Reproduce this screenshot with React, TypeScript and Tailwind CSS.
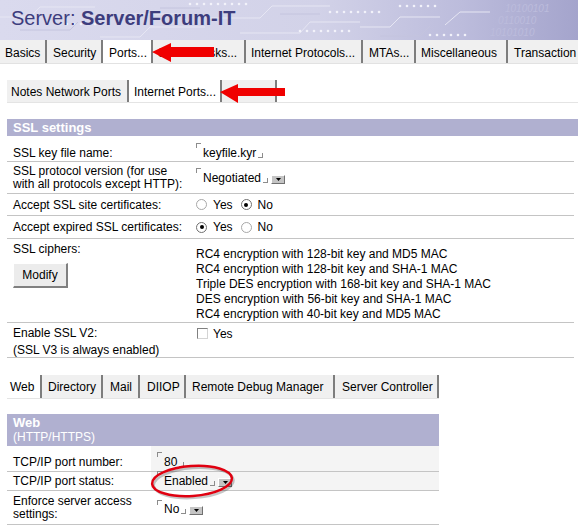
import React from "react";

function Tab({ children, cls, active }: { children?: React.ReactNode; cls: string; active?: boolean }) {
  return (
    <div
      className={`flex items-center h-full shrink-0 whitespace-nowrap border-r-2 border-r-[#7d7d7d] ${
        active ? "bg-white" : "bg-[#f0f0f0]"
      } ${cls}`}
    >
      {children}
    </div>
  );
}

function Drop() {
  return (
    <span className="ml-[3px] mb-[1px] inline-flex w-[14px] h-[9px] items-center justify-center bg-[#c4c4c4] border-t border-l border-t-white border-l-white border-b border-r border-b-[#707070] border-r-[#707070]">
      <svg width="5" height="3" viewBox="0 0 5 3">
        <path d="M0 0h5L2.5 3z" fill="#000" />
      </svg>
    </span>
  );
}

function Field({ text, dropdown }: { text: string; dropdown?: boolean }) {
  return (
    <span className="inline-flex items-end">
      <span className="self-start mt-[-3px] mr-[2px] w-[5px] h-[5px] border-l border-t border-[#8c8c8c]" />
      <span>{text}</span>
      <span className="ml-[2px] mb-[2px] w-[5px] h-[5px] border-r border-b border-[#8c8c8c]" />
      {dropdown && <Drop />}
    </span>
  );
}

function Radio({ checked }: { checked?: boolean }) {
  return (
    <span
      className={`inline-flex w-[11px] h-[11px] rounded-full border bg-white items-center justify-center ${
        checked ? "border-[#707070]" : "border-[#a8a8a8]"
      }`}
    >
      {checked && <span className="w-[4px] h-[4px] rounded-full bg-black" />}
    </span>
  );
}

function YesNo({ yes }: { yes: boolean }) {
  return (
    <span className="flex items-center">
      <Radio checked={yes} />
      <span className="ml-[6px]">Yes</span>
      <span className="ml-[8px] flex">
        <Radio checked={!yes} />
      </span>
      <span className="ml-[6px]">No</span>
    </span>
  );
}

function Header() {
  const dots: React.ReactNode[] = [];
  const rows = [
    { y: 4, x0: 190, x1: 250 },
    { y: 31, x0: 300, x1: 350 },
    { y: 12, x0: 330, x1: 380 },
    { y: 24, x0: 60, x1: 100 },
    { y: 6, x0: 400, x1: 440 },
    { y: 35, x0: 430, x1: 470 },
  ];
  rows.forEach((r, i) => {
    for (let x = r.x0; x <= r.x1; x += 7) {
      dots.push(<circle key={`${i}-${x}`} cx={x} cy={r.y} r={1.3} fill="#f2f2fa" />);
    }
  });
  return (
    <div className="relative h-[40px] overflow-hidden">
      <svg className="absolute left-0 top-0" width="578" height="40" viewBox="0 0 578 40">
        <defs>
          <linearGradient id="hg" x1="0" x2="1" y1="0" y2="0">
            <stop offset="0" stopColor="#dadaee" />
            <stop offset="0.55" stopColor="#d2d2e8" />
            <stop offset="0.8" stopColor="#bcbcdc" />
            <stop offset="1" stopColor="#a4a4cc" />
          </linearGradient>
        </defs>
        <rect width="578" height="40" fill="url(#hg)" />
        <g stroke="#e6e6f3" strokeWidth="1" fill="none">
          <path d="M0 17H30L40 7H95" />
          <path d="M100 37H140L150 27H205" />
          <path d="M210 18H260L272 6H330" />
          <path d="M240 33H300L310 22H360" />
          <path d="M360 27H390L400 17H440" />
          <path d="M120 14H180L186 20" />
          <path d="M445 25L460 12H490" />
        </g>
        <g stroke="#c4c4de" strokeWidth="1" fill="none">
          <path d="M20 30H70L78 22" />
          <path d="M160 8H200" />
          <path d="M280 14H320" />
          <path d="M380 36H420L430 26" />
        </g>
        {dots}
        <g fill="#bcbcdc" fontFamily="Liberation Sans, Arial, sans-serif" fontStyle="italic" fontSize="10">
          <text x="505" y="12">10100101</text>
          <text x="498" y="24">0110010</text>
          <text x="490" y="36">10101010</text>
        </g>
      </svg>
      <div className="relative pl-[11px] pt-[6px] text-[20px] leading-[24px] text-[#3d3d7d] whitespace-nowrap">
        Server: <span className="font-bold">Server/Forum-IT</span>
      </div>
    </div>
  );
}

export default function App() {
  return (
    <div className="relative w-[578px] h-[525px] overflow-hidden bg-white text-[12px] leading-[14px] text-black font-['Liberation_Sans',Arial,sans-serif]">
      <Header />

      {/* top tabs */}
      <div className="flex h-[24px] bg-[#f0f0f0] border-b border-[#e2e2e2] overflow-hidden">
        <Tab cls="w-[47px] pl-[5px] pt-[2px]">Basics</Tab>
        <Tab cls="w-[56px] pl-[6px] pt-[2px]">Security</Tab>
        <Tab cls="w-[50px] pl-[6px] pt-[2px]" active>
          Ports...
        </Tab>
        <Tab cls="w-[93px] pl-[5px] pt-[2px]">Server Tasks...</Tab>
        <Tab cls="w-[117px] pl-[5px] pt-[2px]">Internet Protocols...</Tab>
        <Tab cls="w-[53px] pl-[6px] pt-[2px]">MTAs...</Tab>
        <Tab cls="w-[92px] pl-[5px] pt-[2px]">Miscellaneous</Tab>
        <Tab cls="w-[90px] pl-[6px] pt-[2px]">Transaction</Tab>
      </div>

      {/* second tabs */}
      <div className="mt-[16px] ml-[7px] flex h-[23px] border-b border-[#e4e4e4]">
        <Tab cls="w-[122px] pl-[4px] pt-[1px]">Notes Network Ports</Tab>
        <Tab cls="w-[93px] pl-[5px] pt-[1px]" active>
          Internet Ports...
        </Tab>
        <Tab cls="w-[55px]" />
      </div>

      {/* SSL settings */}
      <div className="mt-[16px] ml-[7px]">
        <div className="h-[17px] bg-[#b0b0d0] pl-[6px] text-white font-bold text-[13px] leading-[17px]">SSL settings</div>
        <div className="mr-[4px]">
          <div className="flex h-[26px] items-end pb-[1px] border-b border-[#c4c4c4]">
            <div className="w-[188px] pl-[6px]">SSL key file name:</div>
            <div className="pl-[1px] flex">
              <Field text="keyfile.kyr" />
            </div>
          </div>
          <div className="flex h-[32px] items-center border-b border-[#c4c4c4]">
            <div className="w-[188px] pl-[6px] leading-[13px] whitespace-nowrap">
              SSL protocol version (for use
              <br />
              with all protocols except HTTP):
            </div>
            <div className="pl-[1px] flex">
              <Field text="Negotiated" dropdown />
            </div>
          </div>
          <div className="flex h-[22px] items-center border-b border-[#c4c4c4]">
            <div className="w-[188px] pl-[6px]">Accept SSL site certificates:</div>
            <div className="pl-[1px]">
              <YesNo yes={false} />
            </div>
          </div>
          <div className="flex h-[23px] items-center border-b border-[#c4c4c4]">
            <div className="w-[188px] pl-[6px]">Accept expired SSL certificates:</div>
            <div className="pl-[1px]">
              <YesNo yes={true} />
            </div>
          </div>
          <div className="flex h-[84px] items-start border-b border-[#c4c4c4]">
            <div className="w-[188px] pl-[6px] pt-[3px]">
              <div>SSL ciphers:</div>
              <button className="mt-[7px] w-[55px] h-[25px] bg-[#ececec] border-t border-l border-t-white border-l-white border-b-2 border-r-2 border-b-[#808080] border-r-[#808080] text-[12px] leading-[14px] font-['Liberation_Sans',Arial,sans-serif]">
                Modify
              </button>
            </div>
            <div className="pl-[1px] pt-[8px] leading-[15px] whitespace-nowrap">
              <div>RC4 encryption with 128-bit key and MD5 MAC</div>
              <div>RC4 encryption with 128-bit key and SHA-1 MAC</div>
              <div>Triple DES encryption with 168-bit key and SHA-1 MAC</div>
              <div>DES encryption with 56-bit key and SHA-1 MAC</div>
              <div>RC4 encryption with 40-bit key and MD5 MAC</div>
            </div>
          </div>
          <div className="flex h-[35px] items-start border-b border-[#c4c4c4]">
            <div className="w-[188px] pl-[6px] pt-[2px] leading-[17px]">
              Enable SSL V2:
              <br />
              (SSL V3 is always enabled)
            </div>
            <div className="pl-[2px] pt-[2px] h-[19px] flex items-center">
              <span className="w-[11px] h-[11px] bg-white border-t border-l border-t-[#808080] border-l-[#808080] border-b border-r border-b-[#d4d4d4] border-r-[#d4d4d4]" />
              <span className="ml-[5px]">Yes</span>
            </div>
          </div>
        </div>
      </div>

      {/* protocol tabs */}
      <div className="mt-[17px] ml-[7px] w-[432px] flex h-[24px] border-b border-[#e4e4e4]">
        <Tab cls="w-[35px] pl-[3px] pt-[1px]" active>
          Web
        </Tab>
        <Tab cls="w-[61px] pl-[6px] pt-[1px]">Directory</Tab>
        <Tab cls="w-[37px] pl-[7px] pt-[1px]">Mail</Tab>
        <Tab cls="w-[46px] pl-[7px] pt-[1px]">DIIOP</Tab>
        <Tab cls="w-[149px] pl-[6px] pt-[1px]">Remote Debug Manager</Tab>
        <Tab cls="w-[104px] pl-[7px] pt-[1px]">Server Controller</Tab>
      </div>

      {/* Web section */}
      <div className="mt-[15px] ml-[7px] w-[432px]">
        <div className="h-[32px] bg-[#b0b0d0] pl-[6px] pt-[2px] text-white leading-[14px]">
          <div className="font-bold text-[13px]">Web</div>
          <div>(HTTP/HTTPS)</div>
        </div>
        <div className="flex h-[26px] border-b border-[#c4c4c4]">
          <div className="w-[144px] pl-[6px] flex items-end pb-[2px]">TCP/IP port number:</div>
          <div className="flex-1 bg-[#f4f4f4] pl-[6px] flex items-end pb-[2px]">
            <Field text="80" />
          </div>
        </div>
        <div className="flex h-[19px] border-b border-[#c4c4c4]">
          <div className="w-[144px] pl-[6px] flex items-center">TCP/IP port status:</div>
          <div className="flex-1 bg-[#f4f4f4] pl-[6px] flex items-center">
            <Field text="Enabled" dropdown />
          </div>
        </div>
        <div className="flex h-[34px] border-b border-[#c4c4c4]">
          <div className="w-[144px] pl-[6px] pt-[4px] leading-[13px]">
            Enforce server access
            <br />
            settings:
          </div>
          <div className="flex-1 pl-[6px] pt-[4px] leading-[13px]">
            <Field text="No" dropdown />
          </div>
        </div>
      </div>

      {/* annotations */}
      <svg className="absolute left-0 top-0 pointer-events-none" width="578" height="525" viewBox="0 0 578 525">
        <polygon points="152,52 171,43 171,47 214,47 214,57 171,57 171,62" fill="#f00000" />
        <polygon points="220,92 238,84 238,88 285,88 285,96 238,96 238,103" fill="#f00000" />
        <g transform="rotate(-4 192 481)">
          <ellipse cx="193.5" cy="483" rx="40" ry="15" fill="none" stroke="rgba(0,0,0,0.22)" strokeWidth="2.5" />
          <ellipse cx="192" cy="481" rx="40" ry="15" fill="none" stroke="#e00010" strokeWidth="2.5" />
        </g>
      </svg>
    </div>
  );
}
